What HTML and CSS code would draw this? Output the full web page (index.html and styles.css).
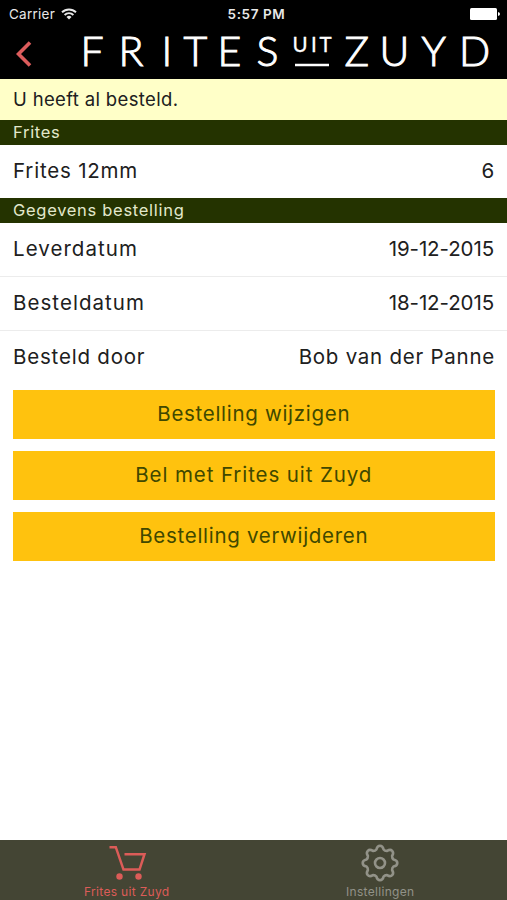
FILE: index.html
```html
<!DOCTYPE html>
<html lang="nl">
<head>
  <meta charset="UTF-8">
  <meta name="viewport" content="width=device-width, initial-scale=1.0">
  <title>Frites uit Zuyd</title>
  <link rel="stylesheet" href="styles.css">
</head>
<body>
  <header class="header">
    <div class="status">
      <div class="carrier">
        <span>Carrier</span>
        <svg width="16" height="12" viewBox="0 0 16 12">
          <g fill="none" stroke="#e8e8e8" stroke-width="1.9">
            <path d="M1 4.3a10 10 0 0 1 14 0"/>
            <path d="M3.6 7a6.2 6.2 0 0 1 8.8 0"/>
          </g>
          <path d="M8 11.4L5.5 8.9a3.6 3.6 0 0 1 5 0z" fill="#e8e8e8"/>
        </svg>
      </div>
      <span class="time">5:57 PM</span>
      <svg class="battery" width="30" height="12" viewBox="0 0 30 12">
        <rect width="27" height="12" rx="1.5" fill="#fff"/>
        <path d="M28 4q2 .6 2 2t-2 2z" fill="#fff"/>
      </svg>
    </div>
    <div class="navbar">
      <svg class="back" width="16" height="26" viewBox="0 0 16 26">
        <path d="M14 1.5L2.5 13 14 24.5" fill="none" stroke="#dc5c5c" stroke-width="3.6"/>
      </svg>
      <svg class="logo" width="427" height="51" viewBox="80 28 427 51">
        <text class="logo-text" y="66.4" x="80.5 118.5 161.5 183.5 217.5 256.5">FRITES</text>
        <text class="logo-uit" y="51.8" x="292.5 311 319.5">UIT</text>
        <path d="M295 65h34" stroke="#fff" stroke-width="2.6"/>
        <text class="logo-text" y="66.4" x="344.5 379.5 421.5 459">ZUYD</text>
      </svg>
    </div>
  </header>

  <main class="content">
    <div class="notice">U heeft al besteld.</div>
    <h2 class="section">Frites</h2>
    <div class="row">
      <span>Frites 12mm</span>
      <span>6</span>
    </div>
    <h2 class="section">Gegevens bestelling</h2>
    <div class="row">
      <span class="wide">Leverdatum</span>
      <span class="date">19-12-2015</span>
    </div>
    <div class="row">
      <span class="wide">Besteldatum</span>
      <span class="date">18-12-2015</span>
    </div>
    <div class="row">
      <span>Besteld door</span>
      <span class="name">Bob van der Panne</span>
    </div>
    <div class="buttons">
      <button type="button">Bestelling wijzigen</button>
      <button type="button" class="call">Bel met Frites uit Zuyd</button>
      <button type="button">Bestelling verwijderen</button>
    </div>
  </main>

  <nav class="tabs">
    <a class="tab active">
      <svg width="40" height="38" viewBox="0 0 40 38">
        <path d="M2.5 3.2h6.3l7.7 22.4H32.5L37.5 10.2H17.5" fill="none" stroke="currentColor" stroke-width="2.5"/>
        <circle cx="12.5" cy="32.5" r="3.2" fill="currentColor"/>
        <circle cx="31.5" cy="32.5" r="3.2" fill="currentColor"/>
      </svg>
      <span>Frites uit Zuyd</span>
    </a>
    <a class="tab">
      <svg width="40" height="38" viewBox="-20 -19 40 38">
        <g fill="none" stroke="currentColor" stroke-width="2.6" stroke-linejoin="round">
          <path d="M-3.6-13.5Q-2.8-17.3 0-17.3T3.6-13.5Q4.8-12 7-12.1Q10.3-14.1 12.2-12.2T12.1-7Q12-4.8 13.5-3.6Q17.3-2.8 17.3 0T13.5 3.6Q12 4.8 12.1 7Q14.1 10.3 12.2 12.2T7 12.1Q4.8 12 3.6 13.5Q2.8 17.3 0 17.3T-3.6 13.5Q-4.8 12-7 12.1Q-10.3 14.1-12.2 12.2T-12.1 7Q-12 4.8-13.5 3.6Q-17.3 2.8-17.3 0T-13.5-3.6Q-12-4.8-12.1-7Q-14.1-10.3-12.2-12.2T-7-12.1Q-4.8-12-3.6-13.5z"/>
          <circle r="5"/>
        </g>
      </svg>
      <span>Instellingen</span>
    </a>
  </nav>
</body>
</html>
```
FILE: styles.css
```css
* {
  box-sizing: border-box;
}

body {
  margin: 0;
  height: 900px;
  display: flex;
  flex-direction: column;
  font-family: Inter, "Liberation Sans", sans-serif;
  background-color: #fff;
  color: #202020;
  overflow: hidden;
}

.header {
  height: 79px;
  background-color: #000;
  color: #e8e8e8;
}

.status {
  height: 28px;
  padding: 0 7px 0 9px;
  display: grid;
  grid-template-columns: 1fr auto 1fr;
  align-items: center;
  font-size: 13.5px;
}

.carrier {
  display: flex;
  align-items: center;
  gap: 6px;
  letter-spacing: 0.25px;
}

.time {
  padding-left: 4px;
  font-weight: 600;
  font-size: 13.5px;
  letter-spacing: 0.6px;
}

.battery {
  justify-self: end;
}

.navbar {
  height: 51px;
  display: flex;
  justify-content: space-between;
  align-items: center;
  padding-left: 16px;
}

.logo {
  overflow: visible;
}

.logo-text {
  font-family: Lato, sans-serif;
  font-size: 41px;
  font-weight: 300;
  fill: #fff;
  stroke: #fff;
  stroke-width: 1px;
}

.logo-uit {
  font-family: Lato, sans-serif;
  font-size: 20.5px;
  fill: #fff;
  stroke: #fff;
  stroke-width: 0.3px;
}

.content {
  flex: 1;
}

.notice {
  height: 41px;
  padding: 0 13px 2px;
  display: flex;
  align-items: center;
  background-color: #ffffc8;
  font-size: 18.5px;
  letter-spacing: 0.35px;
}

.section {
  height: 25px;
  margin: 0;
  padding: 0 13px 2px;
  display: flex;
  align-items: center;
  background-color: #243300;
  color: #e2e8cc;
  font-size: 16.5px;
  font-weight: 400;
  letter-spacing: 0.7px;
}

.row {
  height: 53px;
  padding: 0 12px 2px 13px;
  display: flex;
  align-items: center;
  justify-content: space-between;
  font-size: 20.5px;
  letter-spacing: 0.8px;
}

.row + .row {
  height: 54px;
  padding-bottom: 3px;
  border-top: 1px solid #ececec;
}

.wide {
  letter-spacing: 1.05px;
}

.date {
  padding-right: 1px;
  letter-spacing: -0.1px;
}

.name {
  letter-spacing: 0.75px;
}

.buttons {
  padding: 6px 12.5px 0 13px;
  display: flex;
  flex-direction: column;
  gap: 12px;
}

.buttons button {
  height: 49px;
  padding: 0 0 2px;
  border: none;
  background-color: #ffc20e;
  color: #404800;
  font-family: inherit;
  font-size: 20.5px;
  letter-spacing: 0.7px;
}

.buttons .call {
  letter-spacing: 0.9px;
}

.tabs {
  height: 60px;
  display: flex;
  background-color: #444534;
}

.tab {
  flex: 1;
  padding-top: 4px;
  display: flex;
  flex-direction: column;
  align-items: center;
  color: #929288;
  font-size: 12px;
  line-height: 15px;
  letter-spacing: 0.32px;
}

.tab svg {
  margin-bottom: 2px;
}

.active {
  color: #dc5c58;
}
```
